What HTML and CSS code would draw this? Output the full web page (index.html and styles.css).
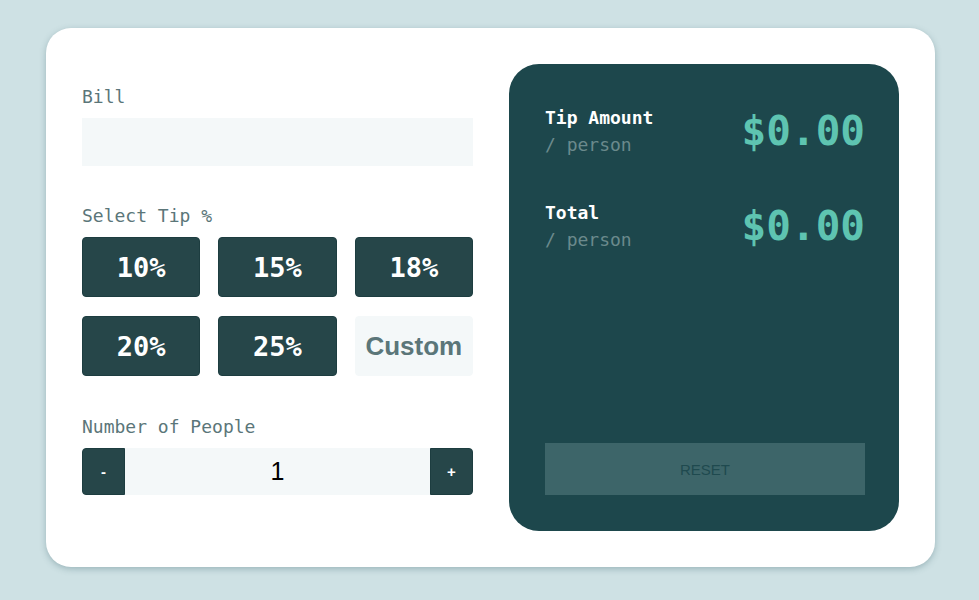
FILE: index.html
```html
<!DOCTYPE html>
<html lang="en">
<head>
<meta charset="utf-8">
<title>Tip Calculator</title>
<link rel="stylesheet" href="styles.css">
</head>
<body>
<main class="card">
  <section class="inputs">
    <label class="label" for="bill">Bill</label>
    <input class="field" id="bill" type="text" value="">
    <div class="label tip-label">Select Tip %</div>
    <div class="tips">
      <button class="tip">10%</button>
      <button class="tip">15%</button>
      <button class="tip">18%</button>
      <button class="tip">20%</button>
      <button class="tip">25%</button>
      <button class="tip custom">Custom</button>
    </div>
    <div class="label people-label">Number of People</div>
    <div class="stepper">
      <button class="step minus">-</button>
      <div class="count">1</div>
      <button class="step plus">+</button>
    </div>
  </section>
  <section class="results">
    <div class="row">
      <div class="names">
        <div class="name">Tip Amount</div>
        <div class="per">/ person</div>
      </div>
      <div class="amount">$0.00</div>
    </div>
    <div class="row total-row">
      <div class="names">
        <div class="name">Total</div>
        <div class="per">/ person</div>
      </div>
      <div class="amount">$0.00</div>
    </div>
    <button class="reset">RESET</button>
  </section>
</main>
</body>
</html>
```
FILE: styles.css
```css
* { box-sizing: border-box; }
html, body { margin: 0; padding: 0; }
body {
  background: #cee1e4;
  height: 600px;
  padding-top: 28px;
  font-family: "DejaVu Sans Mono", "Liberation Mono", monospace;
}
.card {
  width: 889px;
  height: 539px;
  margin: 0 0 0 46px;
  background: #ffffff;
  border-radius: 25px;
  box-shadow: 0 2px 6px rgba(60, 100, 110, 0.35);
  padding: 36px;
  display: flex;
  gap: 36px;
}
.inputs {
  width: 391px;
  display: flex;
  flex-direction: column;
  padding-top: 21px;
}
.label {
  display: block;
  font-size: 18px;
  line-height: 24px;
  color: #5b7679;
  margin-bottom: 9px;
}
.field {
  display: block;
  width: 100%;
  height: 48px;
  border: none;
  background: #f4f8f9;
  margin: 0;
  padding: 0 12px;
}
.tip-label { margin-top: 38px; }
.tips {
  display: grid;
  grid-template-columns: repeat(3, 1fr);
  column-gap: 18px;
  row-gap: 19px;
}
.tip {
  height: 60px;
  border: 1px solid #1d3d40;
  border-radius: 4px;
  background: #264649;
  color: #ffffff;
  font-family: "DejaVu Sans Mono", monospace;
  font-weight: bold;
  font-size: 27px;
  padding: 0;
}
.tip.custom {
  background: #f4f8f9;
  border-color: #f4f8f9;
  color: #5b7679;
  font-family: "Liberation Sans", Arial, sans-serif;
  font-size: 26px;
}
.people-label { margin-top: 39px; }
.stepper {
  display: flex;
  height: 47px;
}
.step {
  width: 43px;
  border: 1px solid #1d3d40;
  background: #264649;
  color: #ffffff;
  font-family: "Liberation Sans", Arial, sans-serif;
  font-weight: bold;
  font-size: 15px;
  padding: 0;
}
.minus { border-radius: 4px 0 0 4px; }
.plus { border-radius: 0 4px 4px 0; }
.count {
  flex: 1;
  background: #f4f8f9;
  display: flex;
  align-items: center;
  justify-content: center;
  font-family: "Liberation Sans", Arial, sans-serif;
  font-size: 25px;
  color: #000000;
}
.results {
  width: 390px;
  background: #1d474c;
  border-radius: 30px;
  padding: 40px 34px 36px 36px;
  display: flex;
  flex-direction: column;
}
.row {
  display: flex;
  justify-content: space-between;
  align-items: center;
}
.total-row { margin-top: 41px; }
.name {
  color: #ffffff;
  font-weight: bold;
  font-size: 18px;
  line-height: 27px;
}
.per {
  color: #6b8a8c;
  font-size: 18px;
  line-height: 27px;
}
.amount {
  color: #5ec4b1;
  font-weight: bold;
  font-size: 41px;
  line-height: 48px;
}
.reset {
  margin-top: auto;
  height: 52px;
  border: none;
  background: #3d6569;
  color: #1f4a4f;
  font-family: "Liberation Sans", Arial, sans-serif;
  font-size: 15px;
  padding: 0;
}
```
